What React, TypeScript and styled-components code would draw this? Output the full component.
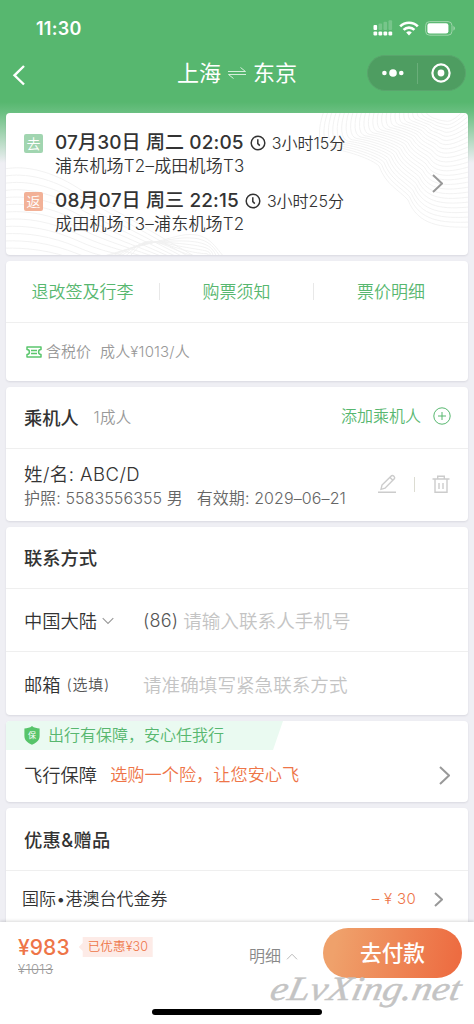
import React from "react";
import styled, { createGlobalStyle } from "styled-components";

const GREEN = "#57b76f";
const ORANGE = "#ee7548";

const Global = createGlobalStyle`
  * { box-sizing: border-box; }
  html, body { margin: 0; padding: 0; }
  body {
    width: 474px; height: 1024px; overflow: hidden; background: #efeff4;
    font-family: Inter, "Noto Sans CJK SC", sans-serif; color: #333;
  }
  svg { display: block; flex: none; }
`;

const Screen = styled.main`
  width: 474px; height: 1024px; overflow: hidden; display: flex; flex-direction: column;
  background: linear-gradient(to bottom, ${GREEN} 0, ${GREEN} 102px, #69bf80 112px, #efeff4 163px);
`;
const StatusBar = styled.div`
  height: 46px; padding: 11px 19px 0 36px; display: flex; align-items: center; color: #fff;
`;
const Icons = styled.div`
  margin-left: auto; display: flex; align-items: center; gap: 6px; padding-bottom: 1px;
`;
const NavBar = styled.header`
  height: 67px; padding: 0 8px 13px 12px; display: flex; align-items: center; color: #fff;
`;
const BackSlot = styled.div`
  padding-top: 4px;
`;
const Route = styled.div`
  display: flex; align-items: center; gap: 7px; margin-left: 151px;
`;
const Capsule = styled.div`
  margin-left: auto; width: 99px; height: 36px; border-radius: 18px; background: #4e9d61;
  border: 1px solid #5aa56d; display: flex; align-items: center; justify-content: space-between; padding: 0 14px 0 14px;
`;
const Cards = styled.div`
  flex: 1; min-height: 0; overflow: hidden; padding: 0 6px; display: flex; flex-direction: column; gap: 6px;
`;
const Card = styled.section<{ h: number }>`
  position: relative; flex: none; height: ${(p) => p.h}px; background: #fff; border-radius: 4px; overflow: hidden;
  box-shadow: 0 1px 2px rgba(60, 60, 80, 0.12);
`;
const Row = styled.div<{ h: number; line?: boolean; pl?: number; pr?: number; pt?: number }>`
  height: ${(p) => p.h}px; padding: ${(p) => p.pt ?? 0}px ${(p) => p.pr ?? 18}px 0 ${(p) => p.pl ?? 18}px;
  display: flex; align-items: center; border-bottom: ${(p) => (p.line ? "1px solid #efefef" : "0")};
`;
const Text = styled.span<{ size: number; c?: string; w?: number; ls?: number; ml?: number; lh?: number }>`
  font-size: ${(p) => p.size}px; color: ${(p) => p.c ?? "inherit"}; font-weight: ${(p) => p.w ?? 350};
  letter-spacing: ${(p) => p.ls ?? 0}px; margin-left: ${(p) => p.ml ?? 0}px;
  line-height: ${(p) => p.lh ?? 24}px; white-space: pre;
`;
const Waves = styled.svg`
  position: absolute; inset: 0; width: 462px; height: 142px;
`;
const Flights = styled.div`
  position: relative; height: 142px; padding: 17px 25px 0 18px; display: flex; justify-content: space-between;
`;
const FlightList = styled.div`
  display: flex; flex-direction: column; gap: 10px;
`;
const Flight = styled.div`
  display: flex; align-items: flex-start; gap: 12px;
`;
const Badge = styled.span<{ c: string }>`
  width: 19px; height: 19px; margin-top: 4px; border-radius: 2px; background: ${(p) => p.c}; color: #fff;
  font-size: 14px; line-height: 19px; text-align: center; font-weight: 350;
`;
const FlightBody = styled.div`
  display: flex; flex-direction: column;
`;
const FlightTime = styled.div`
  display: flex; align-items: center; gap: 6px; height: 24px; padding-top: 1px;
`;
const ArrowSlot = styled.div`
  padding-top: 44px;
`;
const Links = styled.nav`
  height: 62px; display: grid; grid-template-columns: 154px 154px 154px; align-items: center; justify-items: center;
  border-bottom: 1px solid #efefef;
`;
const LinkCell = styled.div<{ split?: boolean }>`
  width: 154px; height: 17px; display: flex; align-items: center; justify-content: center;
  border-right: ${(p) => (p.split ? "1px solid #e8e8e8" : "0")};
`;
const Person = styled.div`
  height: 72px; padding: 13px 18px 0 18px; display: flex; justify-content: space-between;
`;
const PersonInfo = styled.div`
  display: flex; flex-direction: column;
`;
const Actions = styled.div`
  display: flex; align-items: center; gap: 17px; height: 44px;
`;
const Rule = styled.i`
  width: 1px; height: 15px; background: #dcdcd2;
`;
const Label = styled.div`
  width: 119px; display: flex; align-items: center;
`;
const Ribbon = styled.div`
  width: 277px; height: 29px; padding: 0 0 1px 18px; background: #eafaf1; display: flex; align-items: center;
  clip-path: polygon(0 0, 100% 0, 267px 100%, 0 100%);
`;
const End = styled.div<{ gap?: number; up?: number }>`
  margin-left: auto; display: flex; align-items: center; gap: ${(p) => p.gap ?? 0}px; padding-bottom: ${(p) => p.up ?? 0}px;
`;
const Footer = styled.footer`
  position: relative; flex: none; height: 102px; padding: 6px 13px 0 18px; background: #fff; display: flex; align-items: flex-start;
  box-shadow: 0 -1px 3px rgba(0, 0, 0, 0.15);
`;
const Prices = styled.div`
  display: flex; flex-direction: column; padding-top: 8px;
`;
const Strike = styled(Text)`
  text-decoration: line-through; margin-top: -1px;
`;
const Coupon = styled.div`
  width: 74px; height: 20px; margin: 9px 0 0 9px; padding-left: 9px; display: flex; align-items: center; background: #fdebe7;
  clip-path: polygon(4px 0, 100% 0, 100% 100%, 4px 100%, 4px 14px, 0 10px, 4px 6px);
`;
const Detail = styled.div`
  margin: 16px 25px 0 auto; display: flex; align-items: center; gap: 5px;
`;
const Pay = styled.button`
  width: 139px; height: 50px; border: 0; padding: 0; border-radius: 25px; color: #fff; font-family: inherit;
  background: linear-gradient(100deg, #efa16b 10%, #ed6c41 95%); margin-right: -1px;
`;
const HomeBar = styled.div`
  position: absolute; left: 152px; bottom: 9px; width: 170px; height: 6px; border-radius: 3px; background: #000;
`;
const Mark = styled.svg`
  position: absolute; left: 262px; top: 44px;
`;

const Chevron = ({ w = 9, h = 17, c = "#999", sw = 2 }) => (
  <svg width={w + 2} height={h + 2} viewBox={`-1 -1 ${w + 2} ${h + 2}`} fill="none" stroke={c} strokeWidth={sw}>
    <path d={`M0 0 L${w} ${h / 2} L0 ${h}`} />
  </svg>
);

const Clock = () => (
  <svg width="16" height="16" viewBox="0 0 16 16" fill="none" stroke="#333" strokeWidth="1.5">
    <circle cx="8" cy="8" r="6.8" />
    <path d="M7.8 4.2v4.4l2 2" />
  </svg>
);

// Contour lines: each one is a blend between the outer hill edge and the inner cup.
const outer = [318, -2, 312, 14, 311, 33, 321, 35, 340, 37, 366, 46, 373, 53, 380, 72, 392, 76, 402, 87, 412, 112, 434, 115, 466, 114];
const inner = [424, -4, 424, -2, 425, 0, 427, 1, 429, 3, 431, 4, 433, 4, 436, 5, 440, 5, 443, 5, 447, 4, 452, 0, 462, -12];
const ring = (t: number) => {
  const p = outer.map((v, i) => (v + (inner[i] - v) * t).toFixed(1));
  let d = `M${p[0]} ${p[1]}`;
  for (let i = 2; i < p.length; i += 6) d += ` C${p.slice(i, i + 6).join(" ")}`;
  return d;
};
const upper = Array.from({ length: 25 }, (_, i) => ring(i / 25));
const lower = Array.from({ length: 13 }, (_, i) => {
  const y = 56 + i * 7.2;
  const k = i * 5.5;
  return `M-2 ${y} C20 ${y - 4 + i * 0.3} 45 ${y + 2} 72 ${y + 19 - i * 0.6} S${128 - k * 0.3} ${y + 52 - i * 3} ${200 - k} ${150}`;
});
const ridge = Array.from({ length: 7 }, (_, i) => `M${92 + i * 5} 145 C${120 + i * 3} ${136 - i} 135 ${133 - i * 2} 168 ${124 + i * 2} S207 ${132 + i} ${219 - i * 4} 145`);

const flights = [
  { tag: "去", c: "#a1d5b0", time: "07月30日 周二 02:05", span: "3小时15分", path: "浦东机场T2–成田机场T3" },
  { tag: "返", c: "#f2b197", time: "08月07日 周三 22:15", span: "3小时25分", path: "成田机场T3–浦东机场T2" },
];

export default function App() {
  return (
    <Screen>
      <Global />
      <StatusBar>
        <Text size={18} w={600} ls={0.25}>11:30</Text>
        <Icons>
          <svg width="20" height="16" viewBox="0 0 20 16" fill="#fff">
            {[0, 5, 10, 15].map((x, i) => (
              <g key={x}>
                <rect x={x + 0.5} y={i ? 5 - i * 1.6 : 5} width="3.6" height={i ? 5 + i * 1.6 : 5} rx="1" opacity={i ? 0.2 : 1} />
                <rect x={x + 0.5} y="11.4" width="3.7" height="4" rx="1.2" />
              </g>
            ))}
          </svg>
          <svg width="20" height="15" viewBox="0 0 20 15" fill="none" stroke="#fff" strokeWidth="2.7">
            <path d="M1.2 5.4a12.4 12.4 0 0 1 17.6 0" />
            <path d="M4.6 8.9a7.6 7.6 0 0 1 10.8 0" />
            <path d="M7.2 11.6a4 4 0 0 1 5.6 0L10 14.4z" fill="#fff" stroke="none" />
          </svg>
          <svg width="30" height="15" viewBox="0 0 30 15">
            <rect x=".6" y=".6" width="26.4" height="13.6" rx="4" fill="none" stroke="#a0d5ac" />
            <rect x="2.4" y="2.3" width="21" height="10.2" rx="2.3" fill="#fff" />
            <path d="M28.4 5v4.6c2-.8 2-3.8 0-4.6z" fill="#a0d5ac" />
          </svg>
        </Icons>
      </StatusBar>
      <NavBar>
        <BackSlot>
          <svg width="14" height="22" viewBox="0 0 14 22" fill="none" stroke="#fff" strokeWidth="2.4">
            <path d="M12 2 L2.5 11.3 L12 20.5" />
          </svg>
        </BackSlot>
        <Route>
          <Text size={22} w={400}>上海</Text>
          <svg width="18" height="12" viewBox="0 0 18 12" fill="none" stroke="#d5eedb" strokeWidth="1">
            <path d="M0 4.5h17.5l-5-4M18 7.5H.5l5 4" />
          </svg>
          <Text size={22} w={400}>东京</Text>
        </Route>
        <Capsule>
          <svg width="22" height="8" viewBox="0 0 22 8" fill="#fff">
            <circle cx="2.4" cy="4" r="2.3" /><circle cx="11" cy="4" r="3.8" /><circle cx="19.3" cy="4" r="2.3" />
          </svg>
          <svg width="1" height="21"><rect width="1" height="21" fill="#6aae7a" /></svg>
          <svg width="20" height="20" viewBox="0 0 20 20" fill="none" stroke="#fff" strokeWidth="2.2">
            <circle cx="10" cy="10" r="8.6" /><circle cx="10" cy="10" r="3.4" fill="#fff" stroke="none" />
          </svg>
        </Capsule>
      </NavBar>
      <Cards>
        <Card h={142}>
          <Waves viewBox="0 0 462 142" fill="none" stroke="#f1f1f1" strokeWidth="0.9">
            {[...upper, ...lower, ...ridge].map((d) => <path key={d} d={d} />)}
          </Waves>
          <Flights>
            <FlightList>
              {flights.map((f) => (
                <Flight key={f.tag}>
                  <Badge c={f.c}>{f.tag}</Badge>
                  <FlightBody>
                    <FlightTime>
                      <Text size={19} w={500} ls={0.13}>{f.time}</Text>
                      <Clock />
                      <Text size={16}>{f.span}</Text>
                    </FlightTime>
                    <Text size={17} ls={0.2}>{f.path}</Text>
                  </FlightBody>
                </Flight>
              ))}
            </FlightList>
            <ArrowSlot><Chevron /></ArrowSlot>
          </Flights>
        </Card>
        <Card h={120}>
          <Links>
            <LinkCell split><Text size={17} c={GREEN}>退改签及行李</Text></LinkCell>
            <LinkCell split><Text size={17} c={GREEN}>购票须知</Text></LinkCell>
            <LinkCell><Text size={17} c={GREEN}>票价明细</Text></LinkCell>
          </Links>
          <Row h={57} pl={20}>
            <svg width="16" height="12" viewBox="0 0 16 12" fill="none" stroke="#5bc66d" strokeWidth="1.5">
              <path d="M1 1h14v2.6a2.4 2.4 0 0 0 0 4.8V11H1V8.4a2.4 2.4 0 0 0 0-4.8zM5 4.4h6M5 7.6h6" strokeLinejoin="round" />
            </svg>
            <Text size={15} c="#999" ml={4}>含税价</Text>
            <Text size={15} c="#999" ml={9} ls={0.15}>成人¥1013/人</Text>
          </Row>
        </Card>
        <Card h={134}>
          <Row h={62} line pr={17}>
            <Text size={18.2} w={500}>乘机人</Text>
            <Text size={15.5} c="#999" ml={15} ls={0.3}>1成人</Text>
            <End gap={12} up={3}>
              <Text size={16} c={GREEN}>添加乘机人</Text>
              <svg width="18" height="18" viewBox="0 0 18 18" fill="none" stroke={GREEN} strokeWidth="1">
                <circle cx="9" cy="9" r="8.2" /><path d="M5 9h8M9 5v8" />
              </svg>
            </End>
          </Row>
          <Person>
            <PersonInfo>
              <Text size={18.5} ls={0.45}>姓/名: ABC/D</Text>
              <Text size={16} c="#666" ls={0.1}>护照: 5583556355 男   有效期: 2029–06–21</Text>
            </PersonInfo>
            <Actions>
              <svg width="20" height="20" viewBox="0 0 20 20" fill="none" stroke="#ccc" strokeWidth="1.4">
                <path d="M1 18.3h18M4 15.3l1-4.2L14.6 1.7c1.6-.7 3.6 1.3 2.9 2.9L8 14.2zM13 3.4l2.9 2.8" />
              </svg>
              <Rule />
              <svg width="18" height="20" viewBox="0 0 18 20" fill="none" stroke="#ccc" strokeWidth="1.4">
                <path d="M.5 5h17M5.7 5V2.2h6.6V5M3 5v13.2h12V5M7 9v6M11 9v6" />
              </svg>
            </Actions>
          </Person>
        </Card>
        <Card h={188}>
          <Row h={62} line><Text size={18.3} w={500}>联系方式</Text></Row>
          <Row h={63} line pt={2}>
            <Label>
              <Text size={18.3}>中国大陆</Text>
              <svg width="17" height="8" viewBox="-5 0 17 8" fill="none" stroke="#999" strokeWidth="1.1"><path d="M.7 1.2 6 6.5l5.3-5.3" /></svg>
            </Label>
            <Text size={18} c="#555" ls={0.2}>(86)</Text>
            <Text size={18.6} c="#c4c4c4" ml={5}>请输入联系人手机号</Text>
          </Row>
          <Row h={63} pt={2}>
            <Label>
              <Text size={18.3}>邮箱</Text>
              <Text size={15} c="#555" ml={6} ls={0.7}>(选填)</Text>
            </Label>
            <Text size={18.6} c="#c4c4c4">请准确填写紧急联系方式</Text>
          </Row>
        </Card>
        <Card h={81}>
          <Ribbon>
            <svg width="16" height="19" viewBox="0 0 16 19">
              <path d="M8 0C10 1.8 13 2.4 15.6 2.4V10c0 4.2-3.3 7-7.6 8.8C3.7 17 .4 14.2.4 10V2.4C3 2.4 6 1.8 8 0z" fill="#57c46a" />
              <text x="8" y="12.4" fontSize="8" fill="#fff" textAnchor="middle">保</text>
            </svg>
            <Text size={16} c={GREEN} ml={8}>出行有保障，安心任我行</Text>
          </Ribbon>
          <Row h={50}>
            <Text size={18.3}>飞行保障</Text>
            <Text size={17.2} c={ORANGE} ml={13}>选购一个险，让您安心飞</Text>
            <End><Chevron /></End>
          </Row>
        </Card>
        <Card h={126}>
          <Row h={63} line pt={1}><Text size={18.3} w={500} ls={0.3}>优惠&amp;赠品</Text></Row>
          <Row h={56} pl={16} pr={25}>
            <Text size={17}>国际•港澳台代金券</Text>
            <End gap={18}>
              <Text size={15} c={ORANGE} ls={0.3}>– ¥ 30</Text>
              <Chevron w={7} h={13} />
            </End>
          </Row>
        </Card>
      </Cards>
      <Footer>
        <Prices>
          <Text size={21} c={ORANGE} w={500} ls={0.1}>¥983</Text>
          <Strike size={13} c="#999" lh={20} ls={0.4}>¥1013</Strike>
        </Prices>
        <Coupon><Text size={12.5} c={ORANGE} ls={0.15}>已优惠¥30</Text></Coupon>
        <Detail>
          <Text size={16} c="#888">明细</Text>
          <svg width="12" height="7" viewBox="0 0 12 7" fill="none" stroke="#bbb" strokeWidth="1"><path d="M1 6.3 6 1.2l5 5.1" /></svg>
        </Detail>
        <Pay><Text size={21.7} w={500}>去付款</Text></Pay>
        <HomeBar />
        <Mark width="212" height="54" viewBox="0 0 212 54">
          <text x="14" y="34" transform="skewX(-12)" textLength="190" lengthAdjust="spacingAndGlyphs" fontFamily="'Brush Script MT', 'Liberation Serif', cursive" fontStyle="italic" fontSize="34" fill="#c4c4c4" stroke="#c4c4c4" strokeWidth="0.4">eLvXing.net</text>
        </Mark>
      </Footer>
    </Screen>
  );
}
